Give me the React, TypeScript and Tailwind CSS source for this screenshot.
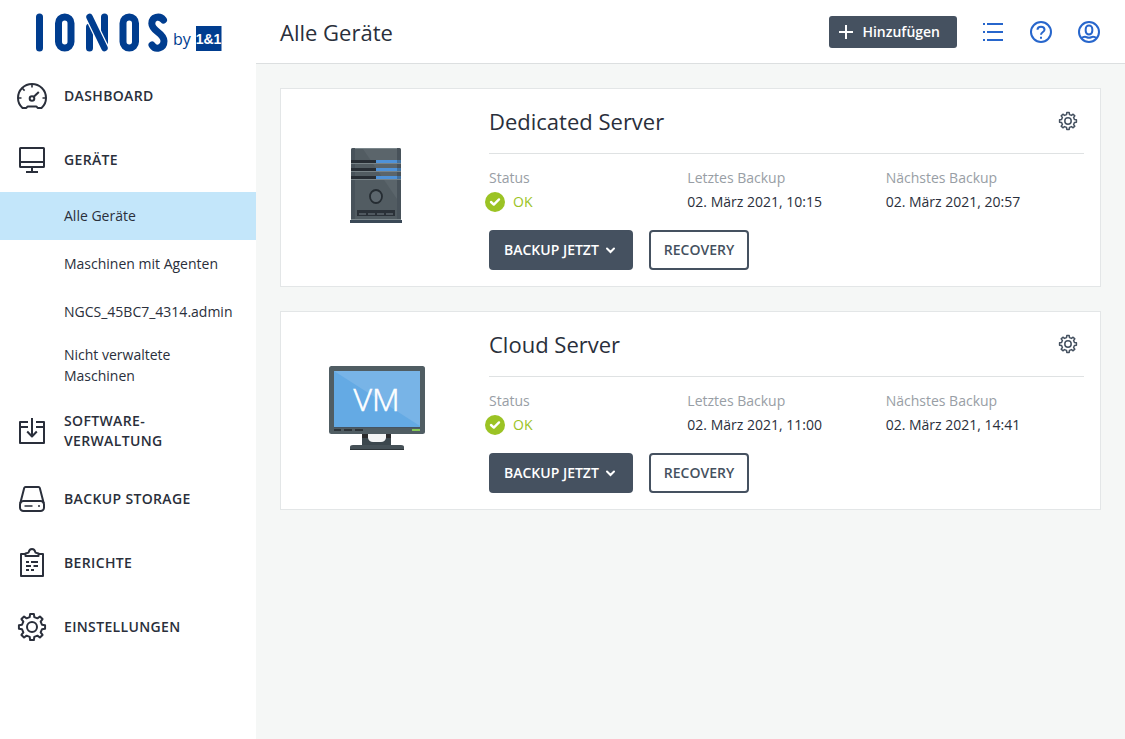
import type { ReactNode } from "react";

function gearPath(center: number, outer: number, inner: number, teeth: number) {
  const points: string[] = [];
  const step = (Math.PI * 2) / teeth;
  const add = (radius: number, angle: number) =>
    points.push(
      `${(center + radius * Math.sin(angle)).toFixed(2)} ${(center - radius * Math.cos(angle)).toFixed(2)}`,
    );
  for (let i = 0; i < teeth; i += 1) {
    const angle = i * step;
    add(inner, angle - step * 0.29);
    add(outer, angle - step * 0.18);
    add(outer, angle + step * 0.18);
    add(inner, angle + step * 0.29);
  }
  return `M${points.join("L")}Z`;
}

function NavIcon({ children }: { children: ReactNode }) {
  return (
    <svg
      className="size-8 shrink-0"
      viewBox="0 0 32 32"
      fill="none"
      stroke="currentColor"
      strokeWidth="2"
      strokeLinejoin="round"
      aria-hidden="true"
    >
      {children}
    </svg>
  );
}

const DashboardIcon = () => (
  <NavIcon>
    <path d="M6.5 28C3.6 25.400 2 21.900 2 18C2 10 8.300 4 16 4s14 6 14 14c0 3.900-1.600 7.400-4.500 10H22c-.9 0-.9-1.600-2-1.600h-8c-1.100 0-1.100 1.600-2 1.600Z" />
    <path d="M16 4v3.500M6.300 8.300l2.300 2.300M2 18h3.500M26.500 18H30" strokeWidth="1.600" />
    <circle cx="16" cy="18.500" r="2.300" />
    <path d="m17.800 16.700 5-4.700" />
  </NavIcon>
);

const DevicesIcon = () => (
  <NavIcon>
    <rect x="4" y="4" width="24" height="19" rx=".5" />
    <path d="M4 18h24M16 23v5M10 28h12" />
  </NavIcon>
);

const SoftwareIcon = () => (
  <NavIcon>
    <path d="M12 7H4v21h24V7h-8M4 12h8M20 12h8M16 3v18M11.200 16.500l4.800 5 4.800-5" />
  </NavIcon>
);

const StorageIcon = () => (
  <NavIcon>
    <path d="M4.200 20.500 8.200 5q.3-1 1.300-1h13q1 0 1.300 1l4 15.500" />
    <rect x="4" y="18" width="24" height="10" rx="3.500" />
    <path d="M8.500 23h8M22 23h2" strokeWidth="1.700" />
  </NavIcon>
);

const ReportsIcon = () => (
  <NavIcon>
    <path d="M10 7H5v22h22V7h-5" />
    <path d="M9.500 9V6.500l3-.9C13 3.400 14.200 2 16 2s3 1.400 3.500 3.600l3 .9V9Z" />
    <path d="M10 15h3M15 15h7M10 19h5M17.500 19H22M10 23h3M15 23h3" strokeWidth="1.800" />
  </NavIcon>
);

const SettingsIcon = () => (
  <NavIcon>
    <path d={gearPath(16, 13.2, 10.2, 8)} />
    <circle cx="16" cy="16" r="5" />
  </NavIcon>
);

function IonosLogo() {
  return (
    <svg className="h-12 w-48" viewBox="0 0 192 48" role="img" aria-label="IONOS by 1&1">
      <g fill="none" stroke="#003d8f" strokeWidth="7" strokeLinecap="round">
        <line x1="7.500" y1="13" x2="7.500" y2="44" />
        <rect x="26.500" y="13" width="12.500" height="31" rx="6.250" />
        <line x1="57.500" y1="23" x2="57.500" y2="44" />
        <line x1="72.500" y1="13" x2="72.500" y2="38" />
        <line x1="57.500" y1="13" x2="72.500" y2="44" stroke="#ffffff" strokeWidth="9" strokeLinecap="butt" />
        <line x1="57.500" y1="13" x2="72.500" y2="44" strokeWidth="6.500" />
        <rect x="91" y="13" width="12.500" height="31" rx="6.250" />
        <path d="M131.500 16C127.500 11 119.800 13 119.800 19.500C119.800 27.500 132 28.500 132 37C132 44.500 123.500 46.500 120 41" />
      </g>
      <text x="141" y="41" fontSize="16" fill="#003d8f" fontFamily="'Open Sans', sans-serif">
        by
      </text>
      <rect x="164" y="22" width="25.500" height="25" fill="#003d8f" />
      <text
        x="176.500"
        y="40"
        fontSize="14"
        fontWeight="700"
        textAnchor="middle"
        fill="#ffffff"
        fontFamily="'Liberation Sans', sans-serif"
      >
        1&amp;1
      </text>
    </svg>
  );
}

function ServerPicture() {
  return (
    <svg className="size-24" viewBox="0 0 96 96" role="img" aria-label="Dedicated Server">
      <rect x="22" y="8" width="50" height="73" rx="2" fill="#5b656b" />
      <path d="M26 9h8l34 50v21H26Z" fill="#525c62" />
      <path d="M22 10q0-2 2-2h2v72h-4ZM68 8h2q2 0 2 2v70h-4Z" fill="#48525a" />
      <path d="M26 8.500h42" stroke="#7b878c" />
      {[20, 28, 36].map((y) => (
        <g key={y}>
          <rect x="22" y={y} width="25" height="3" fill="#272d34" />
          <rect x="47" y={y} width="25" height="3" fill="#4f92d8" />
          <rect x="68" y={y} width="4" height="3" fill="#42719f" />
          <rect x="22" y={y + 3} width="50" height="1" fill="#788388" />
        </g>
      ))}
      <ellipse cx="47" cy="56.500" rx="6" ry="6.500" fill="#5c666d" stroke="#252c32" strokeWidth="1.800" />
      <rect x="28" y="70" width="38" height="6" fill="#2b3138" />
      <path d="M30 74h34" stroke="#50585f" strokeWidth="1.800" strokeDasharray="7 2" />
      <rect x="22" y="79" width="50" height="1" fill="#7b868b" />
      <rect x="21" y="80" width="52" height="3" fill="#3b4957" />
    </svg>
  );
}

function VmPicture() {
  return (
    <svg className="size-24" viewBox="0 0 96 96" role="img" aria-label="Cloud Server">
      <rect x="33" y="70" width="29" height="13" fill="#3c474d" />
      <rect x="33" y="71" width="29" height="4" fill="#2b2b2c" />
      <path d="M39 71h18v4q-1 4-5 4h-8q-4 0-5-4Z" fill="#f3f4f4" />
      <path d="M21 87v-3q0-2 3-2h48q3 0 3 2v3Z" fill="#465157" />
      <rect x="21" y="86" width="54" height="1" fill="#2d3438" />
      <rect x="0" y="3" width="96" height="68" rx="2.500" fill="#505d63" />
      <rect x="5" y="8" width="86" height="56" fill="#64aae4" />
      <path d="M5 8h86v55Z" fill="#78b4e7" />
      <path d="M5 64.500h86" stroke="#455462" />
      <path d="M5 67h7M15 67h8M26 67h8" stroke="#2d3439" strokeWidth="2" />
      <path d="M83 67h8" stroke="#86c957" strokeWidth="2" />
      <text
        x="47.500"
        y="48"
        fontSize="32"
        fontWeight="300"
        textAnchor="middle"
        fill="#ffffff"
        stroke="#ffffff"
        strokeWidth=".6"
        fontFamily="'Open Sans', sans-serif"
      >
        VM
      </text>
    </svg>
  );
}

const subItems = [
  { label: "Alle Geräte", active: true },
  { label: "Maschinen mit Agenten", active: false },
  { label: "NGCS_45BC7_4314.admin", active: false },
  { label: "Nicht verwaltete Maschinen", active: false },
];

function NavLink({ icon, children }: { icon: ReactNode; children: ReactNode }) {
  return (
    <a href="#" className="flex min-h-16 items-center gap-4 px-4 py-4 text-sm leading-5 font-[550] tracking-wide">
      {icon}
      <span>{children}</span>
    </a>
  );
}

function Sidebar() {
  return (
    <aside className="w-64 shrink-0 bg-white">
      <a href="#" className="flex h-16 items-center px-8 pt-1 pb-3">
        <IonosLogo />
      </a>
      <nav>
        <NavLink icon={<DashboardIcon />}>DASHBOARD</NavLink>
        <NavLink icon={<DevicesIcon />}>GERÄTE</NavLink>
        <ul>
          {subItems.map((item) => (
            <li key={item.label}>
              <a
                href="#"
                aria-current={item.active ? "page" : undefined}
                className={`flex min-h-12 items-center pt-2 pr-5 pb-[9px] pl-16 text-sm leading-[21px] ${item.active ? "bg-[#c3e6fa]" : ""}`}
              >
                <span className={item.label.startsWith("Nicht") ? "max-w-32" : ""}>{item.label}</span>
              </a>
            </li>
          ))}
        </ul>
        <NavLink icon={<SoftwareIcon />}>
          SOFTWARE-
          <br />
          VERWALTUNG
        </NavLink>
        <NavLink icon={<StorageIcon />}>BACKUP STORAGE</NavLink>
        <NavLink icon={<ReportsIcon />}>BERICHTE</NavLink>
        <NavLink icon={<SettingsIcon />}>EINSTELLUNGEN</NavLink>
      </nav>
    </aside>
  );
}

function HeaderButton({ label, children }: { label: string; children: ReactNode }) {
  return (
    <button type="button" aria-label={label} className="text-[#2766cc]">
      <svg className="size-6" viewBox="0 0 24 24" fill="none" stroke="currentColor" strokeWidth="2" aria-hidden="true">
        {children}
      </svg>
    </button>
  );
}

function Header() {
  return (
    <header className="flex h-16 items-center gap-6 border-b border-[#dcdfe0] bg-white px-6">
      <h1 className="flex-1 text-[22px] leading-8 text-[#2a2f3b]">Alle Geräte</h1>
      <button
        type="button"
        className="flex h-8 items-center gap-2 rounded-[3px] bg-[#455160] pr-[17px] pl-[9px] text-sm font-semibold text-white"
      >
        <svg className="size-4" viewBox="0 0 16 16" stroke="currentColor" strokeWidth="2" aria-hidden="true">
          <path d="M8 1v14M1 8h14" />
        </svg>
        Hinzufügen
      </button>
      <HeaderButton label="Aktivitäten">
        <path d="M6 4h16M6 12h16M6 20h16M2 4h2M2 12h2M2 20h2" />
      </HeaderButton>
      <HeaderButton label="Hilfe">
        <circle cx="12" cy="12" r="10" />
        <path d="M8.500 9.800C8.500 7.800 10 6.800 12 6.800s3.500 1.100 3.500 3c0 2.300-3.500 2.200-3.500 5M12 16.800v2" />
      </HeaderButton>
      <HeaderButton label="Konto">
        <circle cx="12" cy="12" r="10" />
        <rect x="8.700" y="5.600" width="6.600" height="8.800" rx="3.300" />
        <path d="M4.500 18.500c1-1.300 2.200-1.700 3.500-1.700 1.500 0 2 .9 4 .9s2.500-.9 4-.9c1.300 0 2.500.4 3.500 1.700" />
      </HeaderButton>
    </header>
  );
}

interface DeviceProps {
  name: string;
  picture: ReactNode;
  last: string;
  next: string;
}

function DeviceCard({ name, picture, last, next }: DeviceProps) {
  return (
    <article className="flex border border-[#e3e6e7] bg-white pr-4">
      <div className="flex w-52 shrink-0 items-start pt-[51px] pl-12">{picture}</div>
      <div className="min-w-0 flex-1 pb-4">
        <div className="flex h-[65px] items-center justify-between border-b border-[#dfe2e3]">
          <h2 className="text-[22px] leading-8 text-[#2a2f3b]">{name}</h2>
          <button type="button" aria-label={`Einstellungen ${name}`} className="mr-1.5 text-[#455160]">
            <svg
              className="size-5"
              viewBox="0 0 20 20"
              fill="none"
              stroke="currentColor"
              strokeWidth="1.500"
              strokeLinejoin="round"
              aria-hidden="true"
            >
              <path d={gearPath(10, 8.5, 6.6, 8)} />
              <circle cx="10" cy="10" r="3.200" />
            </svg>
          </button>
        </div>
        <dl className="grid grid-cols-3 pt-3 text-sm leading-6">
          <div>
            <dt className="text-[#989ea5]">Status</dt>
            <dd className="-ml-1 flex items-center gap-2 text-[#9bc324]">
              <svg className="size-5" viewBox="0 0 20 20" aria-hidden="true">
                <circle cx="10" cy="10" r="10" fill="#9bc324" />
                <path d="m6 10 2.800 2.600L14 7.400" fill="none" stroke="#ffffff" strokeWidth="2.400" strokeLinecap="round" strokeLinejoin="round" />
              </svg>
              OK
            </dd>
          </div>
          <div>
            <dt className="text-[#989ea5]">Letztes Backup</dt>
            <dd>{last}</dd>
          </div>
          <div>
            <dt className="text-[#989ea5]">Nächstes Backup</dt>
            <dd>{next}</dd>
          </div>
        </dl>
        <div className="flex gap-4 pt-4 text-sm">
          <button
            type="button"
            className="flex h-10 items-center gap-1.5 rounded bg-[#455160] pr-4 pl-[15px] font-semibold text-white"
          >
            BACKUP JETZT
            <svg
              className="size-3"
              viewBox="0 0 12 12"
              fill="none"
              stroke="currentColor"
              strokeWidth="2"
              strokeLinecap="round"
              aria-hidden="true"
            >
              <path d="m2 4.500 3.500 3.500 3.500-3.500" />
            </svg>
          </button>
          <button
            type="button"
            className="h-10 rounded border-2 border-[#455160] bg-white px-[13px] font-[550] text-[#455160]"
          >
            RECOVERY
          </button>
        </div>
      </div>
    </article>
  );
}

export default function App() {
  return (
    <div className="flex min-h-screen bg-[#f5f7f6] font-['Open_Sans',sans-serif] text-[#2a2f3b]">
      <Sidebar />
      <div className="min-w-0 flex-1">
        <Header />
        <main className="flex flex-col gap-6 p-6">
          <DeviceCard
            name="Dedicated Server"
            picture={<ServerPicture />}
            last="02. März 2021, 10:15"
            next="02. März 2021, 20:57"
          />
          <DeviceCard
            name="Cloud Server"
            picture={<VmPicture />}
            last="02. März 2021, 11:00"
            next="02. März 2021, 14:41"
          />
        </main>
      </div>
    </div>
  );
}
